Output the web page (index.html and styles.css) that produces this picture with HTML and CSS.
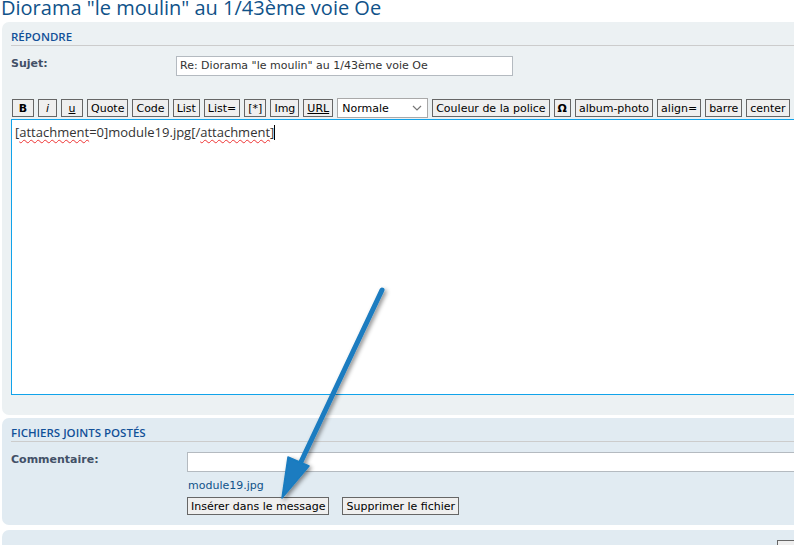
FILE: index.html
```html
<!DOCTYPE html>
<html lang="fr">

<head>
  <link rel="stylesheet" href="styles.css">
</head>

<body>
  <div class="page">
    <h2 class="topicTitle">Diorama "le moulin" au 1/43ème voie Oe</h2>

    <div class="panel">
      <h3>Répondre</h3>
      <div class="row subjectRow">
        <label class="label">Sujet:</label>
        <div class="field subject">Re: Diorama "le moulin" au 1/43ème voie Oe</div>
      </div>

      <div class="toolbar">
        <button class="btn sq bold">B</button>
        <button class="btn sq ital">i</button>
        <button class="btn sq under">u</button>
        <button class="btn">Quote</button>
        <button class="btn">Code</button>
        <button class="btn">List</button>
        <button class="btn">List=</button>
        <button class="btn">[*]</button>
        <button class="btn">Img</button>
        <button class="btn under">URL</button>
        <div class="select">
          <span>Normale</span>
          <svg width="10" height="6" viewBox="0 0 10 6"><path d="M1 1 L5 5 L9 1" fill="none" stroke="#777" stroke-width="1.2"/></svg>
        </div>
        <button class="btn">Couleur de la police</button>
        <button class="btn bold">Ω</button>
        <button class="btn">album-photo</button>
        <button class="btn">align=</button>
        <button class="btn">barre</button>
        <button class="btn">center</button>
        <button class="btn stub"></button>
      </div>

      <div class="editor">
        [<span class="typo">attachment</span>=0]module19.jpg[/<span class="typo">attachment</span>]<span class="caret"></span>
      </div>
    </div>

    <div class="panel bg2">
      <h3>Fichiers joints postés</h3>
      <div class="row">
        <label class="label">Commentaire:</label>
        <div class="attach">
          <div class="field comment"></div>
          <a class="fileLink" href="#">module19.jpg</a>
          <div class="attachBtns">
            <button class="btn">Insérer dans le message</button>
            <button class="btn">Supprimer le fichier</button>
          </div>
        </div>
      </div>
    </div>

    <div class="panel bg2 last">
      <button class="btn corner"></button>
    </div>
  </div>

  <svg class="arrow" width="794" height="545" viewBox="0 0 794 545">
    <defs>
      <filter id="shadow" x="-20%" y="-20%" width="140%" height="140%">
        <feDropShadow dx="2" dy="2" stdDeviation="2" flood-color="#000" flood-opacity="0.45"/>
      </filter>
    </defs>
    <g filter="url(#shadow)">
      <line x1="382" y1="290" x2="300" y2="464" stroke="#1a7cc0" stroke-width="5" stroke-linecap="round"/>
      <polygon points="282,498 288,457 309,466" fill="#1a7cc0" stroke="#1a7cc0" stroke-width="1.5" stroke-linejoin="round"/>
    </g>
  </svg>
</body>

</html>
```

FILE: styles.css
```css
html, body {
  overflow: hidden;
}

body {
  margin: 0;
  padding: 0;
  background: #fff;
  font-family: "DejaVu Sans", Verdana, sans-serif;
  font-size: 11px;
  color: #333;
}

.page {
  width: 860px;
  padding-left: 2px;
}

.topicTitle {
  margin: -6px 0 0 -1px;
  height: 28px;
  font-family: "Open Sans", "Liberation Sans", sans-serif;
  font-size: 20px;
  font-weight: normal;
  line-height: 28px;
  color: #105289;
}

.panel {
  background: #ecf1f3;
  border-radius: 7px;
  padding: 7px 9px 20px;
  margin-bottom: 3px;
}

.bg2 {
  background: #e1ebf2;
  padding-bottom: 10px;
  margin-bottom: 5px;
}

.panel h3 {
  margin: 0 0 10px;
  padding: 0 0 1px;
  border-bottom: 1px #ccc solid;
  font-family: "Open Sans", "Liberation Sans", sans-serif;
  font-size: 11.5px;
  font-weight: 600;
  text-transform: uppercase;
  color: #115098;
}

.row {
  display: flex;
  align-items: flex-start;
}

.label {
  width: 165px;
  flex-shrink: 0;
  padding-top: 1px;
  font-weight: bold;
  color: #425067;
}

.bg2 .label {
  width: 176px;
}

.field {
  height: 18px;
  border: 1px #b4bac0 solid;
  background: #fff;
  line-height: 18px;
  padding: 0 3px;
  color: #333;
}

.subject {
  width: 329px;
}

.subjectRow {
  margin-bottom: 23px;
}

.toolbar {
  display: flex;
  align-items: center;
  gap: 4px;
  height: 18px;
  margin-left: 1px;
  margin-bottom: 2px;
  white-space: nowrap;
}

.btn {
  height: 18px;
  padding: 0 3px;
  margin: 0;
  border: 1px #666 solid;
  background: #efefef;
  font-family: "DejaVu Sans", Verdana, sans-serif;
  font-size: 11px;
  line-height: 15px;
  color: #000;
  flex-shrink: 0;
}

.sq {
  width: 22px;
}

.ital {
  width: 19px;
}

.bold {
  font-weight: bold;
}

.ital {
  font-style: italic;
}

.under {
  text-decoration: underline;
}

.stub {
  width: 30px;
}

.select {
  display: flex;
  align-items: center;
  justify-content: space-between;
  width: 80px;
  height: 18px;
  padding: 0 5px 0 4px;
  border: 1px #a9a9a9 solid;
  background: #fff;
  color: #000;
  flex-shrink: 0;
}

.editor {
  height: 264px;
  border: 1px #11a3ea solid;
  background: #fff;
  padding: 4px 3px 6px;
  font-family: "Open Sans", "Liberation Sans", sans-serif;
  font-size: 13px;
  line-height: 16px;
  color: #333;
}

.typo {
  text-decoration: underline wavy #e33;
  text-decoration-thickness: 1px;
  text-underline-offset: 2px;
}

.caret {
  display: inline-block;
  width: 1px;
  height: 15px;
  background: #000;
  vertical-align: -3px;
}

.attach {
  flex: 1;
}

.comment {
  height: 18px;
}

.fileLink {
  display: block;
  margin: 7px 0 5px 1px;
  color: #105289;
  text-decoration: none;
}

.attachBtns {
  display: flex;
  gap: 13px;
}

.last {
  height: 40px;
  padding: 0;
  position: relative;
}

.corner {
  position: absolute;
  left: 775px;
  top: 10px;
  width: 40px;
}

.arrow {
  position: absolute;
  left: 0;
  top: 0;
  pointer-events: none;
}
```
